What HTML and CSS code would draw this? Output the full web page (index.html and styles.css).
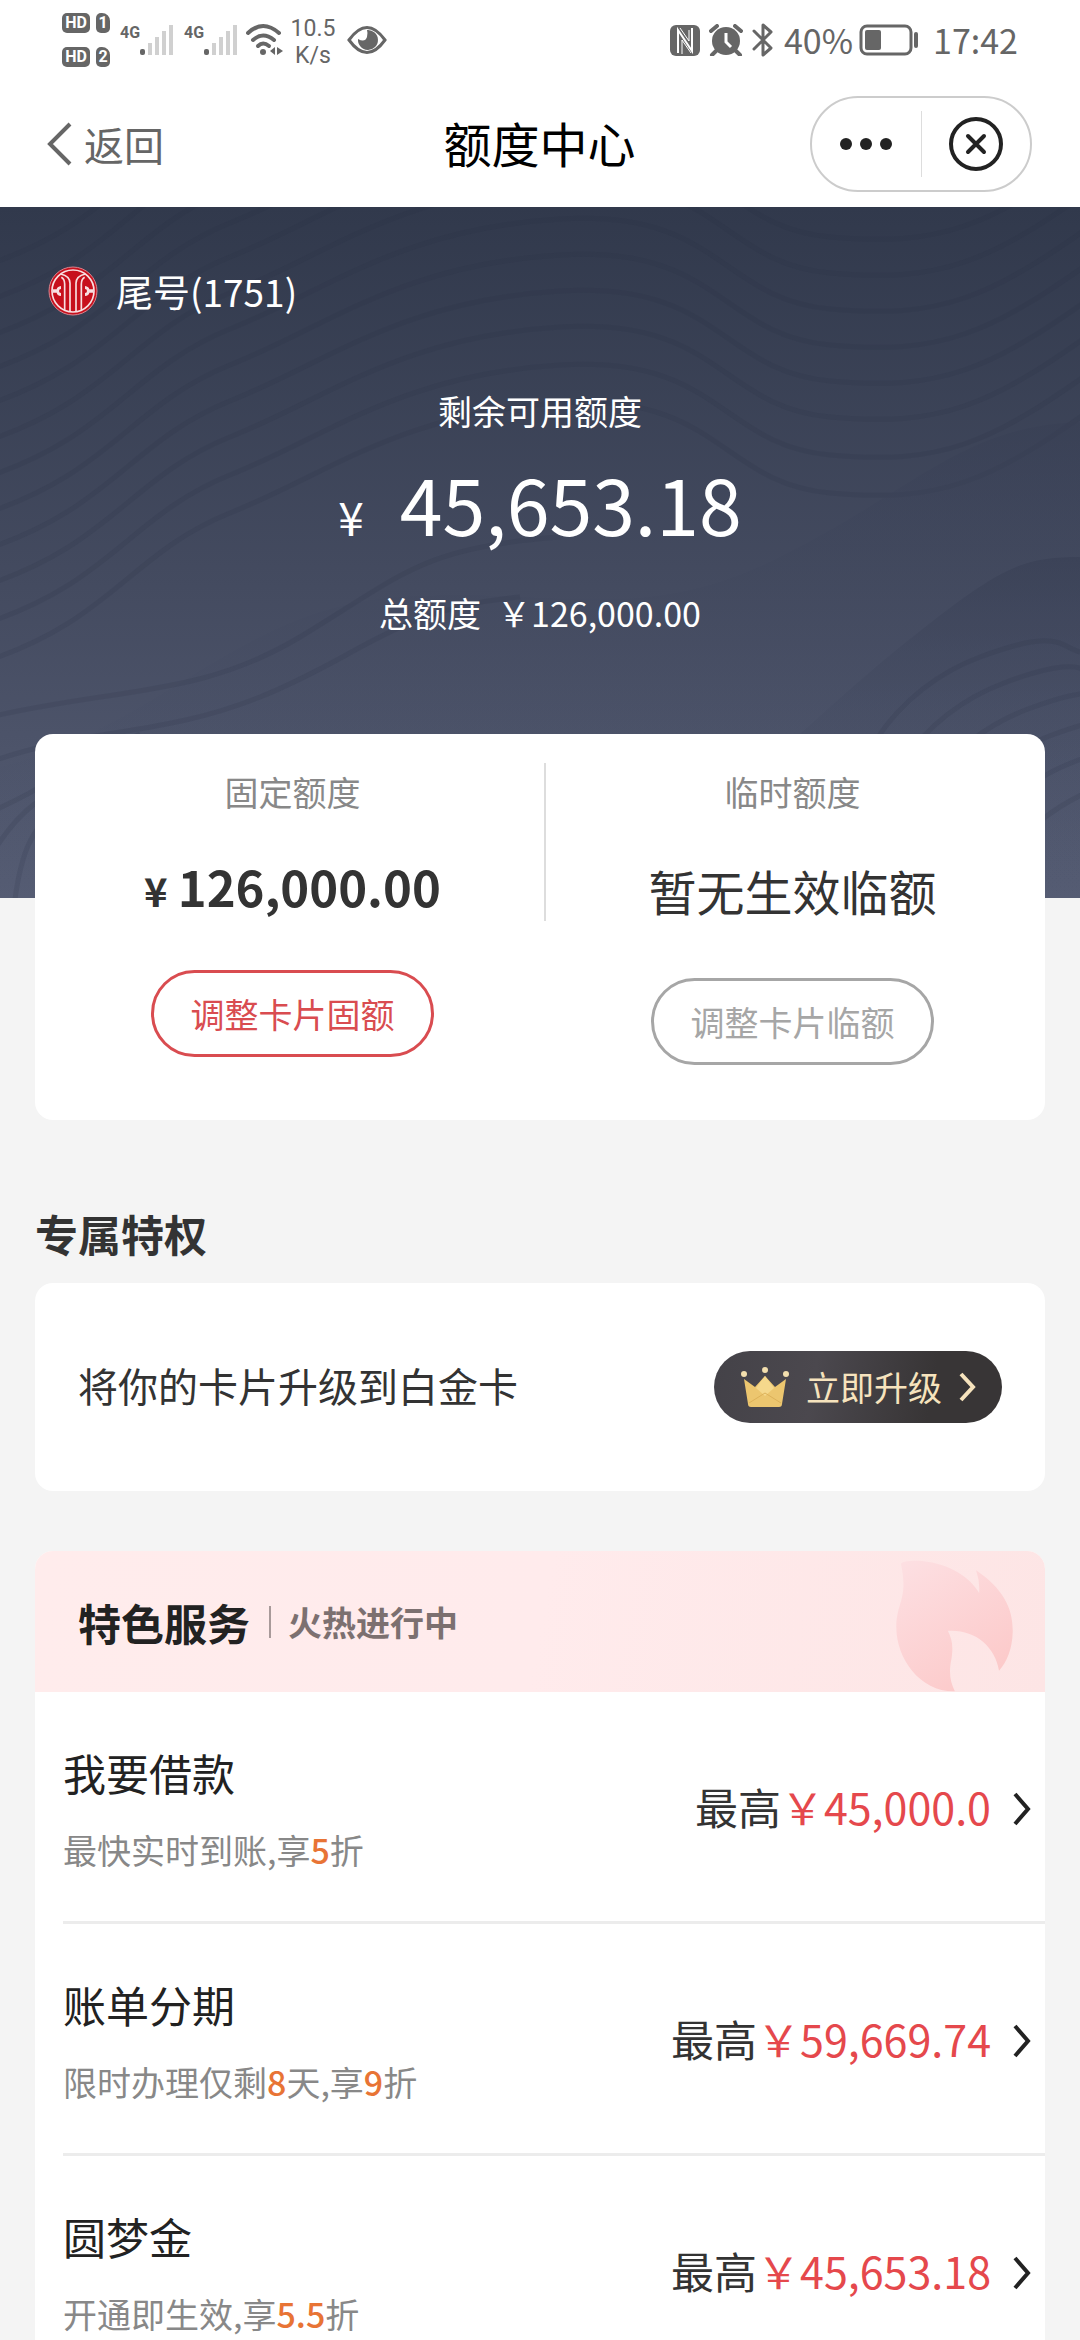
FILE: index.html
```html
<!DOCTYPE html>
<html lang="zh-CN">
<head>
<meta charset="utf-8">
<meta name="viewport" content="width=device-width, initial-scale=1">
<title>额度中心</title>
<link rel="stylesheet" href="styles.css">
</head>
<body>
<div class="app">
  <div class="status">
    <div class="status-side">
      <div class="hd-grid">
        <span class="hd">HD</span><span class="sim">1</span>
        <span class="hd">HD</span><span class="sim">2</span>
      </div>
      <div class="signal">
        <span class="net">4G</span>
        <svg width="34" height="32" viewBox="0 0 34 32" aria-hidden="true"><rect x="0" y="25" width="5" height="6" rx="2" fill="#666"/><g fill="#d0d0d0"><rect x="8" y="19" width="4" height="12"/><rect x="15" y="13" width="4" height="18"/><rect x="22" y="7" width="4" height="24"/><rect x="29" y="1" width="4" height="30"/></g></svg>
      </div>
      <div class="signal">
        <span class="net">4G</span>
        <svg width="34" height="32" viewBox="0 0 34 32" aria-hidden="true"><rect x="0" y="25" width="5" height="6" rx="2" fill="#666"/><g fill="#d0d0d0"><rect x="8" y="19" width="4" height="12"/><rect x="15" y="13" width="4" height="18"/><rect x="22" y="7" width="4" height="24"/><rect x="29" y="1" width="4" height="30"/></g></svg>
      </div>
      <svg class="wifi" width="38" height="34" viewBox="0 0 38 34" aria-hidden="true"><g fill="none" stroke="#666" stroke-width="4" stroke-linecap="round"><path d="M2 10Q17-4 33 10"/><path d="M7 17Q17 8 28 17"/><path d="M12 23Q17 18 23 23"/></g><circle cx="17" cy="29" r="3" fill="#666"/><path d="M24 28l5-4v8zM37 28l-6-4v8z" fill="#666"/></svg>
      <div class="speed"><span>10.5</span><span>K/s</span></div>
      <svg class="eye" width="40" height="28" viewBox="0 0 40 28" aria-hidden="true"><path d="M2 14Q20-11 38 14Q20 39 2 14z" fill="none" stroke="#666" stroke-width="3"/><path d="M20 4a10 10 0 1 1-9 9q7 4 9-2q1-4 0-7z" fill="#666"/></svg>
    </div>
    <div class="status-side">
      <svg class="nfc" width="30" height="31" viewBox="0 0 30 31" aria-hidden="true"><rect width="30" height="31" rx="6" fill="#666"/><path d="M8 28V5L22 26V3" fill="none" stroke="#fff" stroke-width="2"/><path d="M12 29V15l9 13M10 3l9 13V5" fill="none" stroke="#fff" stroke-width="1"/></svg>
      <svg class="alarm" width="34" height="32" viewBox="0 0 34 32" aria-hidden="true"><circle cx="17" cy="17" r="14" fill="#666"/><path d="M2 7l6-5M32 7l-6-5M7 27l-4 4M27 27l4 4" stroke="#666" stroke-width="4" stroke-linecap="round"/><path d="M17 9v9l5 5" fill="none" stroke="#fff" stroke-width="3"/></svg>
      <svg class="bt" width="22" height="34" viewBox="0 0 22 34" aria-hidden="true"><path d="M2 8l17 17-8 7V2l8 7L2 26" fill="none" stroke="#666" stroke-width="3" stroke-linejoin="round" stroke-linecap="round"/></svg>
      <span class="pct">40%</span>
      <svg class="battery" width="60" height="32" viewBox="0 0 60 32" aria-hidden="true"><rect x="2" y="2" width="50" height="28" rx="6" fill="none" stroke="#666" stroke-width="3"/><rect x="6" y="6" width="16" height="20" rx="2" fill="#666"/><rect x="55" y="8" width="4" height="16" rx="2" fill="#666"/></svg>
      <span class="clock">17:42</span>
    </div>
  </div>

  <header class="nav">
    <a class="back" href="#"><svg width="25" height="44" viewBox="0 0 25 44" aria-hidden="true"><path d="M23 2L3 22l20 20" fill="none" stroke="#666" stroke-width="4"/></svg>返回</a>
    <h1 class="nav-title">额度中心</h1>
    <div class="capsule">
      <button class="capsule-btn" type="button" aria-label="更多"><svg width="54" height="14" viewBox="0 0 54 14"><g fill="#222"><circle cx="7" cy="7" r="6"/><circle cx="27" cy="7" r="6"/><circle cx="47" cy="7" r="6"/></g></svg></button>
      <button class="capsule-btn" type="button" aria-label="关闭"><svg width="56" height="56" viewBox="0 0 56 56"><g fill="none" stroke="#222" stroke-width="4"><circle cx="28" cy="28" r="25"/><path d="M20 20l16 16M36 20L20 36" stroke-linecap="round"/></g></svg></button>
    </div>
  </header>

  <section class="hero">
    <svg class="waves" viewBox="0 0 1080 691" preserveAspectRatio="none" aria-hidden="true">
      <defs>
        <linearGradient id="ridge" x1="0" y1="0" x2="0" y2="1"><stop offset="0" stop-color="#383f54"/><stop offset="1" stop-color="#505870" stop-opacity="0"/></linearGradient>
        <path id="wave" d="M-20 200C110 160 130 90 230 50S400-50 560-60S720 20 830 30S990 20 1100-60"/>
        <path id="hill" d="M840 691C830 560 900 480 980 450S1060 440 1080 445"/>
      </defs>
      <g class="wave-lines">
        <use href="#wave" y="-140"/><use href="#wave" y="-104"/><use href="#wave" y="-68"/><use href="#wave" y="-34"/><use href="#wave"/><use href="#wave" y="36"/><use href="#wave" y="72"/><use href="#wave" y="108"/><use href="#wave" y="144"/><use href="#wave" y="180"/><use href="#wave" y="218"/><use href="#wave" y="256"/>
      </g>
      <path d="M0 560C160 520 240 400 400 390S640 420 780 350S960 220 1080 215V691H0z" fill="url(#ridge)" opacity=".5"/>
      <path d="M560 691C740 600 800 520 900 440S1020 350 1080 350V691z" fill="url(#ridge)" opacity=".6"/>
      <g class="wave-lines">
        <use href="#hill"/><use href="#hill" x="24" y="26"/><use href="#hill" x="48" y="52"/><use href="#hill" x="72" y="78"/><use href="#hill" x="96" y="104"/><use href="#hill" x="120" y="130"/>
        <path d="M-10 510C120 480 200 490 300 430S420 340 560 330M-10 555C90 520 160 530 260 490S400 400 520 390M-10 605C50 580 80 550 140 527M-10 650C20 600 40 590 100 560M14 700C20 650 30 620 60 600"/>
      </g>
    </svg>
    <div class="account">
      <svg width="50" height="50" viewBox="0 0 150 150" aria-hidden="true"><circle cx="75" cy="75" r="72" fill="#c7101c" stroke="#d8848f" stroke-width="3"/><circle cx="75" cy="75" r="63" fill="#c7101c" stroke="#f8dfe1" stroke-width="5"/><g fill="none" stroke="#f8dfe1" stroke-width="5"><path d="M38 24Q66 30 66 52V136M112 24Q84 30 84 52V136M50 132V54Q50 40 40 34M100 132V54Q100 40 110 34"/></g><path d="M39 60q-12 2-13 10h-12v10h12q1 8 13 10v-9q-6 0-6-6t6-6zM111 60q12 2 13 10h12v10h-12q-1 8-13 10v-9q6 0 6-6t-6-6z" fill="#f8dfe1"/></svg>
      <span>尾号(1751)</span>
    </div>
    <p class="hero-label">剩余可用额度</p>
    <p class="hero-amount"><span class="hero-yen">¥</span>45,653.18</p>
    <p class="hero-total"><span>总额度</span><span>￥126,000.00</span></p>
  </section>

  <main class="content">
    <section class="card limits">
      <div class="limit limit-fixed">
        <h2 class="limit-label">固定额度</h2>
        <p class="limit-amount"><span class="limit-yen">¥</span>126,000.00</p>
        <button class="pill pill-red" type="button">调整卡片固额</button>
      </div>
      <div class="limit-rule"></div>
      <div class="limit limit-temp">
        <h2 class="limit-label">临时额度</h2>
        <p class="limit-none">暂无生效临额</p>
        <button class="pill pill-gray" type="button">调整卡片临额</button>
      </div>
    </section>

    <h2 class="section-title">专属特权</h2>
    <section class="card upgrade">
      <p class="upgrade-text">将你的卡片升级到白金卡</p>
      <button class="upgrade-btn" type="button">
        <svg width="50" height="42" viewBox="0 0 50 42" aria-hidden="true"><path d="M4 13l11 8 10-11 10 11 11-8-4 25q0 3-3 3H11q-3 0-3-3z" fill="#ecc66f"/><path d="M25 10l9 12-9 8-9-8z" fill="#f5d88c"/><path d="M9 37l16-10 16 10" fill="none" stroke="#dcb159" stroke-width="1"/><g fill="#f3dfae"><circle cx="4" cy="8" r="3"/><circle cx="25" cy="4" r="3"/><circle cx="46" cy="8" r="3"/></g></svg>
        <span>立即升级</span>
        <svg width="18" height="30" viewBox="0 0 18 30" aria-hidden="true"><path d="M3 2l12 13L3 28" fill="none" stroke="#f6e3bd" stroke-width="4"/></svg>
      </button>
    </section>

    <section class="card services">
      <header class="services-head">
        <h2 class="services-title">特色服务</h2>
        <span class="services-rule"></span>
        <span class="services-note">火热进行中</span>
        <svg class="flame" width="117" height="133" viewBox="48 40 350 400" aria-hidden="true"><defs><linearGradient id="flame" x1="0" y1="0" x2=".6" y2="1"><stop offset="0" stop-color="#fde0e3"/><stop offset="1" stop-color="#fccaca"/></linearGradient></defs><path d="M62 55C65 48 90 44 125 46C210 55 270 95 297 142Q300 110 288 74C370 130 400 190 398 260C397 310 380 350 357 376C345 300 280 250 203 256C215 280 220 300 214 340C205 380 210 410 224 438C120 440 48 340 48 245C48 170 85 160 62 55z" fill="url(#flame)"/></svg>
      </header>
      <ul class="service-list">
        <li><a class="service" href="#">
          <span class="service-info"><span class="service-name">我要借款</span><span class="service-sub">最快实时到账,享<b>5</b>折</span></span>
          <span class="service-max">最高<em>￥45,000.0</em></span>
          <svg width="18" height="34" viewBox="0 0 18 34" aria-hidden="true"><path d="M2 2l13 15L2 32" fill="none" stroke="#222" stroke-width="4"/></svg>
        </a></li>
        <li><a class="service" href="#">
          <span class="service-info"><span class="service-name">账单分期</span><span class="service-sub">限时办理仅剩<b>8</b>天,享<b>9</b>折</span></span>
          <span class="service-max">最高<em>￥59,669.74</em></span>
          <svg width="18" height="34" viewBox="0 0 18 34" aria-hidden="true"><path d="M2 2l13 15L2 32" fill="none" stroke="#222" stroke-width="4"/></svg>
        </a></li>
        <li><a class="service" href="#">
          <span class="service-info"><span class="service-name">圆梦金</span><span class="service-sub">开通即生效,享<b>5.5</b>折</span></span>
          <span class="service-max">最高<em>￥45,653.18</em></span>
          <svg width="18" height="34" viewBox="0 0 18 34" aria-hidden="true"><path d="M2 2l13 15L2 32" fill="none" stroke="#222" stroke-width="4"/></svg>
        </a></li>
      </ul>
    </section>
  </main>
</div>
</body>
</html>
```
FILE: styles.css
```css
* { box-sizing: border-box; margin: 0; padding: 0; }
body { background: #f4f4f4; color: #333; font-family: "Noto Sans CJK SC", sans-serif; font-size: 34px; line-height: 48px; }
button { font: inherit; border: 0; background: none; }
a { color: inherit; text-decoration: none; }
ul { list-style: none; }
h1, h2 { font-weight: 400; }
svg { display: block; flex: none; }
.app { height: 100vh; overflow: hidden; }

.status { display: flex; justify-content: space-between; height: 80px; padding: 0 62px; background: #fff; color: #666; font-family: Roboto, sans-serif; }
.status-side { display: flex; align-items: center; }
.hd-grid { display: grid; grid-template-columns: 28px 14px; gap: 14px 6px; }
.hd, .sim { border-radius: 5px; background: #666; color: #fff; font-size: 16px; font-weight: 700; line-height: 20px; text-align: center; }
.sim { border-top-right-radius: 8px; }
.signal { display: flex; align-items: center; margin-left: 10px; }
.net { width: 20px; padding-bottom: 14px; font-size: 16px; font-weight: 700; line-height: 18px; }
.wifi { margin-left: 8px; }
.speed { display: flex; flex-direction: column; width: 58px; padding-top: 4px; font-size: 23px; line-height: 27px; text-align: center; }
.eye { margin-left: 5px; }
.alarm, .bt { margin-left: 9px; }
.pct, .clock { font-family: "Noto Sans CJK SC", sans-serif; }
.pct { margin-left: 10px; }
.battery { margin: 0 14px 0 6px; }

.nav { display: grid; grid-template-columns: 1fr auto 1fr; align-items: center; height: 127px; padding: 0 48px 0 47px; background: #fff; }
.back { display: flex; align-items: center; gap: 12px; color: #666; font-size: 40px; }
.nav-title { padding-bottom: 4px; color: #000; font-size: 48px; line-height: 60px; }
.capsule { display: flex; justify-self: end; align-items: center; width: 222px; height: 96px; border: 2px solid #ccc; border-radius: 48px; }
.capsule-btn { display: flex; flex: 1; align-items: center; justify-content: center; height: 66px; }
.capsule-btn + .capsule-btn { border-left: 1px solid #ddd; }

.hero { position: relative; padding: 60px 48px 261px; background: linear-gradient(#31394c, #444b60 55%, #555c73); color: #fff; text-align: center; }
.waves { position: absolute; inset: 0; width: 100%; height: 100%; }
.wave-lines { fill: none; stroke: #272d42; stroke-width: 5; stroke-opacity: .15; }
.account { position: relative; display: flex; align-items: center; gap: 18px; height: 48px; font-size: 37px; }
.hero-label { position: relative; margin-top: 72px; }
.hero-amount { position: relative; display: flex; align-items: baseline; justify-content: center; gap: 36px; margin-top: 20px; font-size: 77px; line-height: 96px; }
.hero-yen { font-size: 46px; line-height: 48px; }
.hero-total { position: relative; display: flex; justify-content: center; gap: 16px; margin-top: 38px; }

.content { padding: 0 35px; }
.card { border-radius: 18px; background: #fff; }
.limits { position: relative; display: grid; grid-template-columns: 51fr 2px 50fr; margin-top: -164px; padding: 34px 0 55px; }
.limit { display: flex; flex-direction: column; align-items: center; }
.limit-fixed { padding-left: 6px; }
.limit-temp { padding-right: 6px; }
.limit-rule { height: 158px; margin-top: -5px; background: #ddd; }
.limit-label { color: #888; font-size: 34px; }
.limit-amount { display: flex; align-items: baseline; gap: 10px; margin: 40px 0 54px; font-size: 49px; font-weight: 700; line-height: 60px; }
.limit-yen { font-size: 40px; line-height: 48px; }
.limit-none { margin: 40px 0 54px; font-size: 48px; line-height: 68px; }
.pill { width: 283px; height: 87px; border: 3px solid; border-radius: 44px; }
.pill-red { color: #d94c50; }
.pill-gray { color: #a6a6a6; }

.section-title { margin: 83px 0 20px; font-size: 43px; font-weight: 700; line-height: 60px; }
.upgrade { display: flex; align-items: center; justify-content: space-between; height: 208px; padding: 0 43px; }
.upgrade-text { padding-bottom: 4px; font-size: 40px; }
.upgrade-btn { display: flex; align-items: center; justify-content: space-between; width: 288px; height: 72px; padding: 0 26px; border-radius: 36px; background: linear-gradient(100deg, #444248, #4b484e 35%, #383536 75%); color: #f6e3bd; }

.services { overflow: hidden; margin-top: 60px; }
.services-head { display: flex; align-items: center; height: 141px; padding: 0 32px 0 43px; background: linear-gradient(100deg, #ffecec, #ffebec 50%, #fde5e5); }
.services-title { color: #222; font-size: 43px; font-weight: 700; }
.services-rule { width: 2px; height: 32px; margin: 0 17px 0 19px; background: #a89a9a; }
.services-note { color: #7c7070; font-weight: 700; }
.flame { align-self: flex-end; margin-left: auto; }
.service-list { padding-left: 28px; }
.service { display: flex; align-items: center; gap: 22px; padding: 52px 14px 47px 0; border-bottom: 3px solid #ececec; }
.service-info { display: flex; flex: 1; flex-direction: column; gap: 26px; }
.service-name { color: #222; font-size: 43px; line-height: 56px; }
.service-sub { color: #888; }
.service-sub b { color: #e87435; font-weight: 500; }
.service-max { padding-bottom: 6px; font-size: 43px; line-height: 60px; }
.service-max em { color: #e5484c; font-style: normal; }
```
